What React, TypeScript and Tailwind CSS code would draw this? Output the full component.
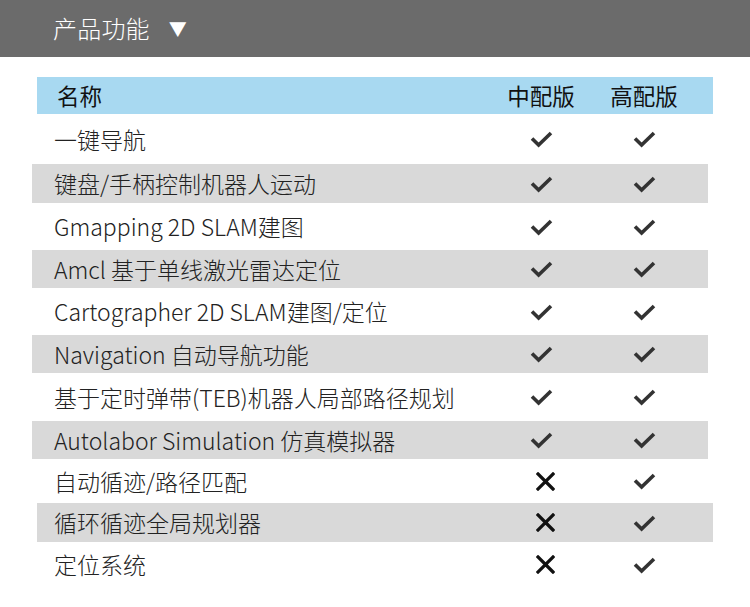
import React from 'react';

type Row = {
  label: string;
  mid: boolean;
  high: boolean;
  gray: boolean;
  shift?: boolean;
  h: string;
};

const ROWS: Row[] = [
  { label: '一键导航', mid: true, high: true, gray: false, h: 'h-[50px]' },
  { label: '键盘/手柄控制机器人运动', mid: true, high: true, gray: true, h: 'h-[39px]' },
  { label: 'Gmapping 2D SLAM建图', mid: true, high: true, gray: false, h: 'h-[47px]' },
  { label: 'Amcl 基于单线激光雷达定位', mid: true, high: true, gray: true, h: 'h-[38px]' },
  { label: 'Cartographer 2D SLAM建图/定位', mid: true, high: true, gray: false, h: 'h-[47px]' },
  { label: 'Navigation 自动导航功能', mid: true, high: true, gray: true, h: 'h-[38px]' },
  { label: '基于定时弹带(TEB)机器人局部路径规划', mid: true, high: true, gray: false, h: 'h-[48px]' },
  { label: 'Autolabor Simulation 仿真模拟器', mid: true, high: true, gray: true, h: 'h-[38px]' },
  { label: '自动循迹/路径匹配', mid: false, high: true, gray: false, h: 'h-[44px]' },
  { label: '循环循迹全局规划器', mid: false, high: true, gray: true, shift: true, h: 'h-[39px]' },
  { label: '定位系统', mid: false, high: true, gray: false, h: 'h-[45px]' },
];

const Check = () => (
  <svg width="23" height="18" viewBox="0 0 23 18">
    <path d="M2 8.5 L8.6 15 L21 3" fill="none" stroke="#333" strokeWidth="3.6" strokeLinecap="butt" strokeLinejoin="miter" />
  </svg>
);

const Cross = () => (
  <svg width="19" height="19" viewBox="0 0 19 19">
    <path d="M2 2 L17 17 M17 2 L2 17" fill="none" stroke="#111" strokeWidth="3.2" strokeLinecap="square" />
  </svg>
);

export default function App() {
  return (
    <div
      className="w-[750px] h-[607px] bg-white overflow-hidden text-[#222]"
      style={{ fontFamily: '"Noto Sans CJK SC", "Noto Sans", sans-serif' }}
    >
      {/* Top bar */}
      <div className="h-[57px] bg-[#6b6b6b] flex items-center pl-[53px] pb-[2px] text-white font-light">
        <span className="text-[24px] tracking-[0.2px] leading-none">产品功能</span>
        <span className="ml-[19px] text-[18px] leading-none">▼</span>
      </div>

      <div className="pt-[20px]">
        {/* Header row */}
        <div className="ml-[37px] w-[676px] h-[37px] bg-[#a8d9f1] flex items-center pl-[20px] pr-[19px] text-[22.5px] text-[#111]">
          <div className="flex-1">名称</div>
          <div className="w-[100px] text-center">中配版</div>
          <div className="w-[3px]" />
          <div className="w-[100px] text-center">高配版</div>
        </div>

        {ROWS.map((r) => (
          <div
            key={r.label}
            className={
              (r.shift ? 'ml-[37px] pl-[17px] pr-[19px] ' : 'ml-[32px] pl-[22px] pr-[14px] ') +
              (r.gray ? 'bg-[#d9d9d9] ' : '') +
              r.h +
              ' w-[676px] flex items-center text-[23px] font-light'
            }
          >
            <div className="flex-1 whitespace-nowrap">{r.label}</div>
            <div className="w-[100px] flex justify-center">
              {r.mid ? <Check /> : <span className="ml-[8px] flex"><Cross /></span>}
            </div>
            <div className="w-[3px]" />
            <div className="w-[100px] flex justify-center">{r.high ? <Check /> : <Cross />}</div>
          </div>
        ))}
      </div>
    </div>
  );
}
